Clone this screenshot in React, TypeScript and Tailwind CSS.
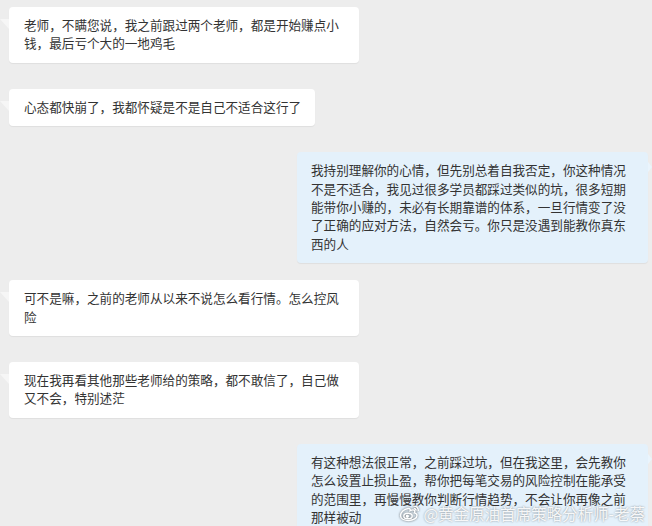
import React from "react";

type Msg = { side: "left" | "right"; text: string; gap: number };

const MESSAGES: Msg[] = [
  { side: "left", gap: 7, text: "老师，不瞒您说，我之前跟过两个老师，都是开始赚点小钱，最后亏个大的一地鸡毛" },
  { side: "left", gap: 26, text: "心态都快崩了，我都怀疑是不是自己不适合这行了" },
  {
    side: "right",
    gap: 26,
    text: "我持别理解你的心情，但先别总着自我否定，你这种情况不是不适合，我见过很多学员都踩过类似的坑，很多短期能带你小赚的，未必有长期靠谱的体系，一旦行情变了没了正确的应对方法，自然会亏。你只是没遇到能教你真东西的人",
  },
  { side: "left", gap: 17, text: "可不是嘛，之前的老师从以来不说怎么看行情。怎么控风险" },
  { side: "left", gap: 26, text: "现在我再看其他那些老师给的策略，都不敢信了，自己做又不会，特别述茫" },
  {
    side: "right",
    gap: 26,
    text: "有这种想法很正常，之前踩过坑，但在我这里，会先教你怎么设置止损止盈，帮你把每笔交易的风险控制在能承受的范围里，再慢慢教你判断行情趋势，不会让你再像之前那样被动",
  },
];

function Bubble({ msg }: { msg: Msg }) {
  if (msg.side === "left") {
    return (
      <div className="relative flex justify-start pl-[9px]" style={{ marginTop: msg.gap }}>
        <div className="absolute left-0 top-[12px] h-0 w-0 border-l-[9px] border-t-[10px] border-l-transparent border-t-[#f6f6f6]" />
        <div className="max-w-[350px] rounded-[4px] bg-white pl-[15px] pr-[14px] pt-[9px] pb-[10px] text-[12.6px] leading-[18.4px] text-[#333333] shadow-[0_1px_1px_rgba(0,0,0,0.06)]">
          {msg.text}
        </div>
      </div>
    );
  }
  return (
    <div className="relative flex justify-end pr-[4px]" style={{ marginTop: msg.gap }}>
      <div className="w-[351px] rounded-[4px] bg-[#e4f1fb] pl-[14px] pr-[12px] pt-[9px] pb-[10px] text-[12.6px] leading-[18.4px] text-[#333333] shadow-[0_1px_1px_rgba(0,0,0,0.06)]">
        {msg.text}
      </div>
      <div className="absolute right-0 top-[10px] h-0 w-0 border-y-[5px] border-l-[4px] border-y-transparent border-l-[#eaf4fc]" />
    </div>
  );
}

function WeiboLogo() {
  return (
    <svg width="22" height="18" viewBox="0 0 22 18" fill="none" stroke="white" strokeWidth="1.4" className="drop-shadow-[0_0_1px_rgba(0,0,0,0.6)]">
      <path d="M9 4.5C5 5 1.5 8.5 1.5 11.5c0 3 3.5 5 8 5 5 0 8.5-2.6 8.5-5 0-1.8-1.6-2.4-2.6-2.6.6-1.2.6-2.3-.3-2.8-1-.5-2.8 0-4 .6.4-1.3.2-2.4-2.1-2.2z" />
      <ellipse cx="9" cy="12" rx="4.2" ry="2.8" />
      <circle cx="8.3" cy="12.3" r="1" fill="white" />
      <path d="M14.5 2.2c2.6-.4 5.2 1.7 4.8 4.8" />
      <path d="M14.8 4.5c1.3-.1 2.4.9 2.2 2.2" />
    </svg>
  );
}

export default function App() {
  return (
    <div
      className="relative h-[526px] w-[652px] overflow-hidden bg-[#ededed]"
      style={{ fontFamily: '"Noto Sans CJK SC", "Microsoft YaHei", sans-serif' }}
    >
      {MESSAGES.map((m, i) => (
        <Bubble key={i} msg={m} />
      ))}
      <div className="absolute bottom-[3px] right-[7px] flex items-center gap-[2px] text-[15.5px] leading-[20px] text-white/90 [text-shadow:0_0_2px_rgba(0,0,0,0.45)]">
        <WeiboLogo />
        <span>@黄金原油首席策略分析师-老蔡</span>
      </div>
    </div>
  );
}
